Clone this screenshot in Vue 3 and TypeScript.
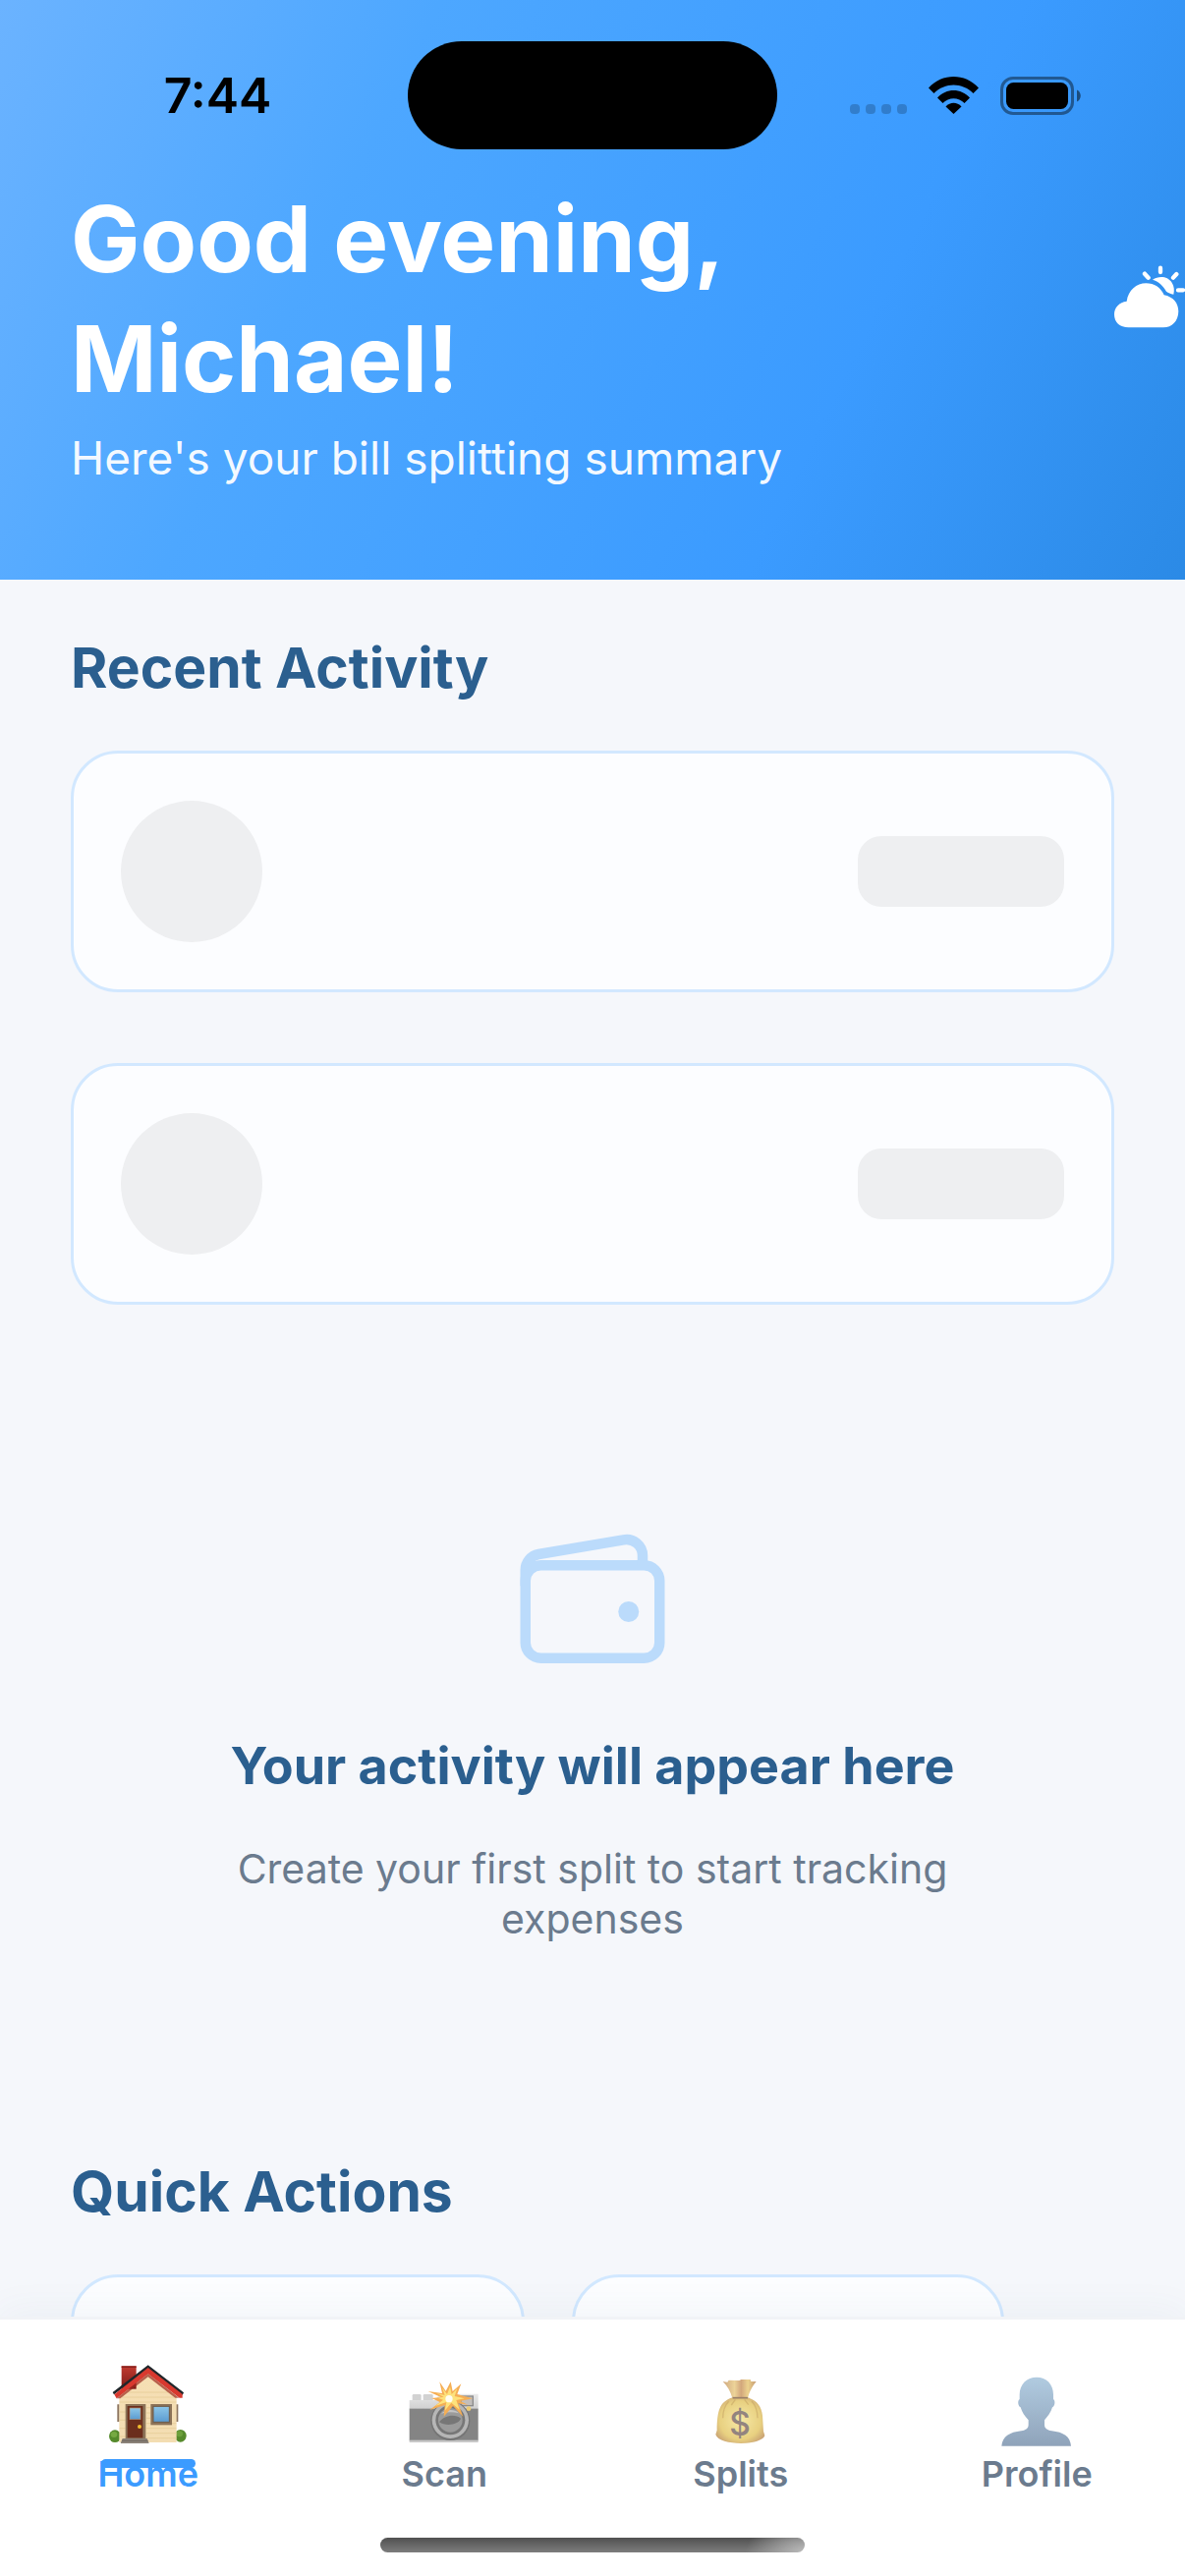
<script setup lang="ts">
import { ref } from 'vue'

type TabId = 'home' | 'scan' | 'splits' | 'profile'

interface Tab {
  id: TabId
  label: string
}

const userName = 'Michael'
const placeholders = [1, 2]
const tabs: Tab[] = [
  { id: 'home', label: 'Home' },
  { id: 'scan', label: 'Scan' },
  { id: 'splits', label: 'Splits' },
  { id: 'profile', label: 'Profile' },
]
const activeTab = ref<TabId>('home')
</script>

<template>
  <div class="screen">
    <header class="hero">
      <div class="status">
        <div class="status-side status-left">
          <time class="clock">7:44</time>
        </div>
        <div class="island"></div>
        <div class="status-side status-right">
          <div class="dots"><i></i><i></i><i></i><i></i></div>
          <svg class="wifi" viewBox="0 0 51 38" aria-hidden="true">
            <path d="M0 11.500C14-3.800 37-3.800 51 11.500L45.500 17C34.500 5.500 16.500 5.500 5.500 17Z" />
            <path d="M9 21.500C18 11.500 33 11.500 42 21.500L36.500 27C30.500 20.500 20.500 20.500 14.500 27Z" />
            <path d="M17.500 30.500C22 25.500 29 25.500 33.500 30.500L25.500 38Z" />
          </svg>
          <svg class="battery" viewBox="0 0 82 39" aria-hidden="true">
            <rect x="1.500" y="1.500" width="72" height="36" rx="11.500" fill="none" stroke="#000" stroke-opacity=".42" stroke-width="3" />
            <rect x="6" y="6" width="63" height="27" rx="7.500" />
            <path d="M78 13.500C83 15.500 83 23.500 78 25.500Z" fill-opacity=".5" />
          </svg>
        </div>
      </div>
      <div class="greeting">
        <h1>Good evening,<br />{{ userName }}!</h1>
        <svg class="weather" viewBox="162 78 216 216" aria-hidden="true">
          <path d="M312 280H206C179 280 162 264 162 240C162 219 177 203 200 200C205 166 230 145 259 145C284 145 304 158 314 181C342 186 358 206 358 230C358 260 338 280 312 280Z" />
          <path d="M279 134C297 122 325 122 338 143C345 154 346 165 343 179C334 177 327 174 321 170C312 153 297 139 279 134Z" />
          <path d="M303 98V111M255 116L266 128M352 117L342 128M357 166H372" fill="none" stroke="#fff" stroke-width="13" stroke-linecap="round" />
        </svg>
      </div>
      <p class="subtitle">Here's your bill splitting summary</p>
    </header>

    <main class="content">
      <section>
        <h2>Recent Activity</h2>
        <div class="activity">
          <div v-for="n in placeholders" :key="n" class="card skeleton">
            <span class="skeleton-avatar"></span>
            <span class="skeleton-amount"></span>
          </div>
        </div>
        <div class="empty">
          <svg class="wallet" viewBox="0 0 512 512" aria-hidden="true">
            <rect x="48" y="144" width="416" height="288" rx="48" ry="48" />
            <path d="M411.360 144v-30A50 50 0 0 0 352 64.900L88.640 109.850A50 50 0 0 0 48 159v49" />
            <circle class="clasp" cx="368" cy="288" r="32" />
          </svg>
          <h3>Your activity will appear here</h3>
          <p>Create your first split to start tracking expenses</p>
        </div>
      </section>
      <section>
        <h2>Quick Actions</h2>
        <div class="actions">
          <div class="card action action-wide"></div>
          <div class="card action"></div>
        </div>
      </section>
    </main>

    <nav class="tabbar">
      <div class="tabs">
        <button
          v-for="tab in tabs"
          :key="tab.id"
          type="button"
          class="tab"
          :class="{ active: tab.id === activeTab }"
          @click="activeTab = tab.id"
        >
          <span class="tab-icon">
            <svg v-if="tab.id === 'home'" viewBox="86 78 252 252" aria-hidden="true">
              <defs>
                <linearGradient id="wall" x1="0" y1="0" x2="0" y2="1">
                  <stop offset="0" stop-color="#f6dfb4" />
                  <stop offset="1" stop-color="#f3ddb2" />
                </linearGradient>
                <linearGradient id="brick" x1="0" y1="0" x2="0" y2="1">
                  <stop offset="0" stop-color="#c23a30" />
                  <stop offset="1" stop-color="#7e1b17" />
                </linearGradient>
                <linearGradient id="glass" x1="0" y1="0" x2="0" y2="1">
                  <stop offset="0" stop-color="#8cc6e8" />
                  <stop offset="1" stop-color="#5b9bd0" />
                </linearGradient>
              </defs>
              <ellipse cx="110" cy="299" rx="18" ry="19" fill="#568a2c" />
              <ellipse cx="310" cy="298" rx="18" ry="19" fill="#568a2c" />
              <ellipse cx="107" cy="294" rx="10" ry="9" fill="#76a942" />
              <ellipse cx="307" cy="292" rx="10" ry="9" fill="#6da03c" />
              <path d="M117 202h7v53h-7zM296 202h7v53h-7z" fill="#8d7660" />
              <path d="M123 176L211 108L298 176V318H123Z" fill="url(#wall)" />
              <path d="M150 165H272M130 180H292M124 195H297M206 212H218M206 228H218M206 244H218M206 260H297M206 275H297M206 290H297M206 305H297M124 225H142M124 250H142M124 275H142M124 300H142" stroke="#e3c892" stroke-width="2" />
              <rect x="130" y="85" width="45" height="70" fill="url(#brick)" />
              <path d="M130 85h45v5h-45z" fill="#8a231e" />
              <path d="M211 82L320 166L316 174L211 94L107 172L103 165Z" fill="#20262a" />
              <path d="M211 90L316 171V182H307L211 109L115 184L108 172Z" fill="#d8392f" />
              <path d="M211 109L306 182H294L211 118L126 184H115Z" fill="#9d2a20" opacity=".7" />
              <rect x="142" y="201" width="62" height="105" fill="#8c7358" />
              <rect x="148" y="207" width="47" height="97" fill="#6b2e1d" />
              <rect x="155" y="213" width="33" height="35" fill="url(#glass)" stroke="#b48b68" stroke-width="2" />
              <circle cx="185" cy="270" r="6" fill="#f0bd2e" />
              <rect x="219" y="201" width="65" height="64" fill="#8c7358" />
              <rect x="227" y="208" width="49" height="48" fill="url(#glass)" stroke="#6d5946" stroke-width="3" />
              <path d="M133 306H208L214 321H127Z" fill="#8b8279" />
              <path d="M131 313H211" stroke="#5f5851" stroke-width="2" />
            </svg>
            <svg v-else-if="tab.id === 'scan'" viewBox="1009 114 216 216" aria-hidden="true">
              <defs>
                <linearGradient id="metal" x1="0" y1="0" x2="0" y2="1">
                  <stop offset="0" stop-color="#e9e9e9" />
                  <stop offset="1" stop-color="#cfcfcf" />
                </linearGradient>
              </defs>
              <rect x="1020" y="171" width="27" height="22" rx="4" fill="#d2d2d2" />
              <rect x="1053" y="171" width="30" height="22" rx="4" fill="#d2d2d2" />
              <path d="M1011 189H1090L1104 170H1221V217H1011Z" fill="url(#metal)" />
              <rect x="1011" y="215" width="210" height="98" fill="#848484" />
              <rect x="1011" y="311" width="210" height="7" fill="#c8c8c8" />
              <rect x="1168" y="177" width="37" height="29" fill="#c2bebb" stroke="#8b8b8b" stroke-width="4" />
              <circle cx="1136" cy="252" r="60" fill="#757575" />
              <circle cx="1136" cy="250" r="56" fill="#b6b6b6" />
              <circle cx="1136" cy="250" r="45" fill="#777" />
              <circle cx="1136" cy="250" r="37" fill="#9b9b9b" />
              <path d="M1102 256C1118 235 1150 230 1168 245C1160 264 1124 270 1102 256Z" fill="#777" />
              <path d="M1108 230C1122 216 1150 215 1162 229C1144 224 1126 225 1108 230Z" fill="#c4c4c4" />
              <circle cx="1192" cy="215" r="7" fill="#eccb75" />
              <path d="M1103 133L1122 161L1137 133L1143 162L1169 139L1157 171L1204 184L1166 192L1190 203L1160 199L1175 240L1144 207L1116 239L1119 204L1073 219L1104 195L1079 183L1107 180L1068 162L1111 168Z" fill="#f5ae55" />
              <path d="M1111 151L1126 171L1135 148L1140 171L1157 153L1149 177L1179 184L1154 189L1164 218L1139 197L1119 221L1124 195L1090 207L1114 188L1097 182L1116 179L1094 168L1119 174Z" fill="#fde27c" />
              <circle cx="1132" cy="185" r="11" fill="#fffdf0" />
            </svg>
            <svg v-else-if="tab.id === 'splits'" viewBox="113 114 216 216" aria-hidden="true">
              <defs>
                <radialGradient id="sack" cx=".5" cy=".5" r=".6">
                  <stop offset="0" stop-color="#f6e8a6" />
                  <stop offset=".7" stop-color="#e8d080" />
                  <stop offset="1" stop-color="#c9a273" />
                </radialGradient>
                <linearGradient id="neck" x1="0" y1="0" x2="1" y2="0">
                  <stop offset="0" stop-color="#cfa880" />
                  <stop offset=".35" stop-color="#ecd398" />
                  <stop offset=".55" stop-color="#d2a77c" />
                  <stop offset=".75" stop-color="#ecd28e" />
                  <stop offset="1" stop-color="#c59a72" />
                </linearGradient>
              </defs>
              <path d="M166 132L180 134L184 128L216 129L222 126H250L252 132L268 132C256 145 247 163 242 183H195C190 163 180 147 166 132Z" fill="url(#neck)" />
              <path d="M196 181H242C270 190 284 207 287 236L290 284L294 297C284 329 154 329 144 294L148 281C149 220 156 194 196 181Z" fill="url(#sack)" />
              <path d="M184 193C170 207 166 225 166 244M204 187L192 204M232 187L244 203M254 192C267 206 272 225 272 244" fill="none" stroke="#c8a766" stroke-width="4" opacity=".6" />
              <path d="M196 182H242" stroke="#9a8069" stroke-width="5" />
              <text x="218" y="298" text-anchor="middle" class="coin">$</text>
            </svg>
            <svg v-else viewBox="1018 114 216 216" aria-hidden="true">
              <defs>
                <linearGradient id="bust" x1="0" y1="0" x2="0" y2="1">
                  <stop offset="0" stop-color="#b1cbe0" />
                  <stop offset="1" stop-color="#8fa3ba" />
                </linearGradient>
              </defs>
              <path d="M1126 119C1156 119 1177 140 1177 172V186C1184 191 1182 207 1174 211C1170 226 1160 239 1150 250V264C1150 275 1158 280 1172 283C1208 287 1229 300 1231 329H1019C1022 300 1043 287 1079 283C1094 280 1101 275 1101 264V250C1090 239 1081 226 1077 211C1069 207 1067 191 1074 186V172C1074 140 1096 119 1126 119Z" fill="url(#bust)" />
            </svg>
          </span>
          <span class="tab-label">{{ tab.label }}</span>
        </button>
      </div>
      <div class="home-indicator"></div>
    </nav>
  </div>
</template>

<style>
body {
  margin: 0;
}
</style>

<style scoped>
.screen {
  display: flex;
  flex-direction: column;
  height: 100vh;
  overflow: hidden;
  background: #f5f7fb;
  font-family: Inter, "Liberation Sans", sans-serif;
}

h1,
h2,
h3,
p {
  margin: 0;
}

.hero {
  flex: none;
  padding-bottom: 94px;
  color: #fff;
  background: linear-gradient(116deg, #6bb3ff 0%, #4da7ff 30%, #3b9bff 70%, #2b8ae6 100%);
}

.status {
  display: grid;
  grid-template-columns: 1fr 376px 1fr;
  padding: 42px 0 30px;
  color: #000;
}

.island {
  height: 110px;
  border-radius: 55px;
  background: #000;
}

.status-side {
  display: flex;
  align-items: center;
  justify-content: center;
}

.status-left {
  padding-left: 28px;
}

.status-right {
  gap: 22px;
  padding-right: 32px;
}

.clock {
  font-size: 50px;
  font-weight: 600;
  line-height: 60px;
}

.dots {
  display: flex;
  align-self: flex-end;
  gap: 6px;
  padding-bottom: 36px;
}

.dots i {
  width: 10px;
  height: 10px;
  border-radius: 4px;
  background: rgba(0, 0, 0, 0.2);
}

.wifi {
  width: 51px;
  height: 38px;
}

.battery {
  width: 82px;
  height: 39px;
}

.greeting {
  display: flex;
  align-items: center;
  justify-content: space-between;
  padding-left: 72px;
}

h1 {
  font-size: 94px;
  font-weight: 700;
  line-height: 122px;
}

.weather {
  width: 72px;
  height: 72px;
  margin-bottom: 4px;
  fill: #fff;
}

.subtitle {
  padding: 10px 72px 0;
  font-size: 46px;
  line-height: 60px;
  color: rgba(255, 255, 255, 0.95);
}

.content {
  flex: 1;
  min-height: 0;
  overflow: hidden;
  padding: 54px 72px 0;
}

h2 {
  margin-bottom: 48px;
  font-size: 57px;
  font-weight: 700;
  line-height: 72px;
  color: #2b5f8f;
}

.card {
  box-sizing: border-box;
  border: 3px solid #d2e8ff;
  border-radius: 48px;
  background: #fcfdff;
}

.activity {
  display: flex;
  flex-direction: column;
  gap: 72px;
}

.skeleton {
  display: flex;
  align-items: center;
  justify-content: space-between;
  padding: 48px;
}

.skeleton-avatar {
  width: 144px;
  height: 144px;
  border-radius: 50%;
  background: #eeeff1;
}

.skeleton-amount {
  width: 210px;
  height: 72px;
  border-radius: 24px;
  background: #eeeff1;
}

.empty {
  display: flex;
  flex-direction: column;
  align-items: center;
  padding: 218px 144px 216px;
  text-align: center;
}

.wallet {
  width: 168px;
  height: 168px;
  fill: none;
  stroke: #bbdbfb;
  stroke-width: 32;
  stroke-linejoin: round;
}

.wallet .clasp {
  fill: #bbdbfb;
  stroke: none;
}

h3 {
  margin: 48px 0 43px;
  font-size: 52px;
  font-weight: 700;
  line-height: 72px;
  white-space: nowrap;
  color: #2b5f8f;
}

.empty p {
  font-size: 41px;
  line-height: 51px;
  color: #6b7b8e;
}

.actions {
  display: flex;
  gap: 48px;
}

.action {
  width: 440px;
  height: 360px;
}

.action-wide {
  width: 462px;
}

.tabbar {
  position: relative;
  flex: none;
  padding: 38px 0 24px;
  border-top: 3px solid #f1f3f6;
  background: #fff;
  box-shadow: 0 -6px 36px rgba(60, 90, 110, 0.05);
}

.tabs {
  display: flex;
}

.tab {
  display: flex;
  flex: 1;
  flex-direction: column;
  align-items: center;
  padding: 0;
  border: 0;
  background: none;
  font: inherit;
  color: #6b7b8e;
}

.tab-icon {
  display: flex;
  align-items: flex-end;
  height: 91px;
  padding-bottom: 6px;
}

.tab-icon svg {
  width: 72px;
  height: 72px;
}

.active .tab-icon svg {
  width: 84px;
  height: 84px;
}

.coin {
  font-family: Inter, "Liberation Sans", sans-serif;
  font-size: 100px;
  font-weight: 500;
  fill: #93847f;
}

.tab-label {
  position: relative;
  font-size: 36px;
  font-weight: 600;
  line-height: 44px;
}

.active .tab-label {
  color: #3b9bff;
}

.active .tab-label::before {
  content: "";
  position: absolute;
  top: 7px;
  right: 3px;
  left: 3px;
  height: 9px;
  border-radius: 5px;
  background: #3b9bff;
}

.home-indicator {
  width: 432px;
  height: 15px;
  margin: 43px auto 0;
  border-radius: 8px;
  background:
    radial-gradient(ellipse 60px 36px at 100% 100%, rgba(190, 190, 190, 0.95), rgba(190, 190, 190, 0)),
    linear-gradient(#505050, #7d7d7d);
}
</style>
